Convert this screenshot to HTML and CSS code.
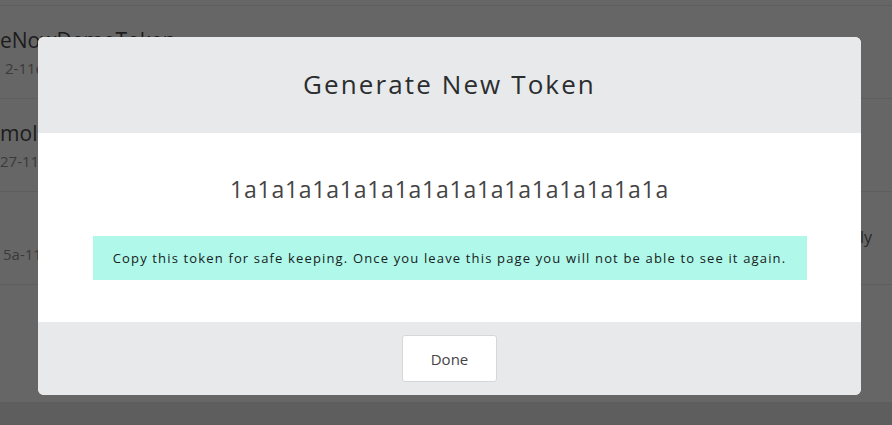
FILE: index.html
```html
<!DOCTYPE html>
<html>
<head>
<meta charset="utf-8">
<link rel="stylesheet" href="styles.css">
</head>
<body>
<div class="page">
  <div class="row row-top"></div>
  <div class="row">
    <div class="cell">
      <div class="name">eNowDemoToken</div>
      <div class="sub sub-a">2-11e</div>
    </div>
  </div>
  <div class="row">
    <div class="cell">
      <div class="name">moIn</div>
      <div class="sub">27-11e</div>
    </div>
  </div>
  <div class="row">
    <div class="cell">
      <div class="name">&nbsp;</div>
      <div class="sub sub-c">5a-11</div>
    </div>
    <div class="side">ly</div>
  </div>
  <div class="row row-empty"></div>
  <div class="foot"></div>
</div>

<div class="modal">
  <div class="modal-head">
    <h1 class="modal-title">Generate New Token</h1>
  </div>
  <div class="modal-body">
    <div class="token">1a1a1a1a1a1a1a1a1a1a1a1a1a1a1a1a</div>
    <div class="notice">Copy this token for safe keeping. Once you leave this page you will not be able to see it again.</div>
  </div>
  <div class="modal-foot">
    <button class="btn">Done</button>
  </div>
</div>
</body>
</html>
```
FILE: styles.css
```css
html, body {
  margin: 0;
  padding: 0;
  height: 100%;
  overflow: hidden;
}
body {
  background: #666666;
  font-family: "Open Sans", "Liberation Sans", sans-serif;
  position: relative;
}
.page {
  display: flex;
  flex-direction: column;
  height: 425px;
}
.row {
  height: 92px;
  border-bottom: 1px solid #5e5e5e;
  display: flex;
  justify-content: space-between;
  align-items: center;
  flex-shrink: 0;
}
.row-top {
  height: 5px;
}
.row-empty {
  height: 117px;
  border-bottom: none;
}
.foot {
  flex: 1;
  background: #5e5e5e;
}
.cell {
  display: flex;
  flex-direction: column;
  gap: 5px;
}
.name {
  font-size: 21px;
  color: #1c1c1c;
  line-height: 26px;
}
.sub {
  font-size: 15px;
  color: #3a3a3a;
  line-height: 20px;
}
.sub-a {
  padding-left: 5px;
}
.sub-c {
  padding-left: 3px;
}
.side {
  font-size: 16px;
  color: #262626;
  margin-right: 20px;
  margin-top: -2px;
}
.modal {
  position: absolute;
  left: 38px;
  top: 37px;
  width: 823px;
  height: 358px;
  border-radius: 6px;
  overflow: hidden;
  display: flex;
  flex-direction: column;
  background: #ffffff;
}
.modal-head {
  height: 96px;
  background: #e8e9ea;
  display: flex;
  align-items: center;
  justify-content: center;
}
.modal-title {
  margin: 0 0 3px;
  font-weight: 400;
  font-size: 26px;
  letter-spacing: 2.1px;
  color: #2b2d2f;
}
.modal-body {
  height: 189px;
  display: flex;
  flex-direction: column;
  align-items: center;
}
.token {
  margin-top: 40px;
  font-size: 23px;
  letter-spacing: 0.75px;
  color: #444444;
  line-height: 32px;
}
.notice {
  margin-top: 31px;
  width: 714px;
  height: 44px;
  background: #b0f8ea;
  display: flex;
  align-items: center;
  justify-content: center;
  font-size: 13px;
  font-weight: 500;
  letter-spacing: 1.15px;
  color: #172120;
}
.modal-foot {
  flex: 1;
  background: #e8e9ea;
  display: flex;
  align-items: center;
  justify-content: center;
}
.btn {
  width: 95px;
  height: 47px;
  background: #ffffff;
  border: 1px solid #d6d7d8;
  border-radius: 3px;
  font-family: "Open Sans", "Liberation Sans", sans-serif;
  font-size: 15px;
  color: #444444;
  padding: 0;
}
```
